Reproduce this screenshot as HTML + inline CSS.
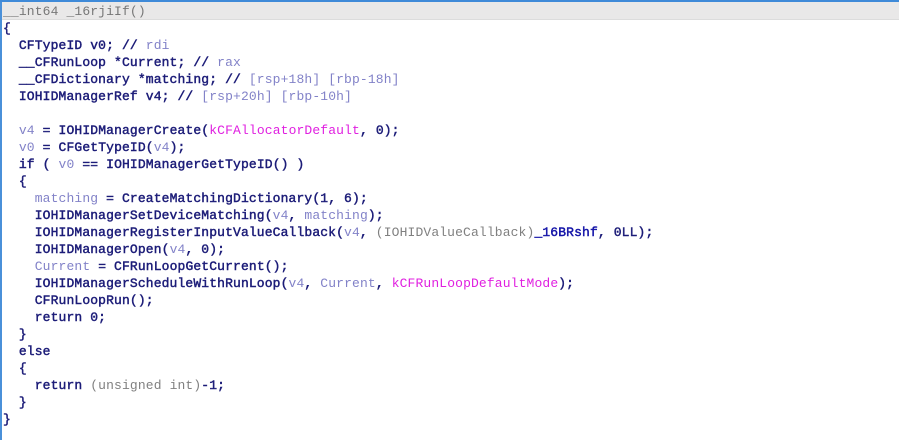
<!DOCTYPE html>
<html><head><meta charset="utf-8"><style>
html,body{margin:0;padding:0;background:#fff;width:899px;height:440px;overflow:hidden}
.top{position:absolute;left:0;top:0;width:899px;height:2px;background:#3f8ad8}
.hdr{position:absolute;left:0;top:2px;width:899px;height:17px;background:#e9e8e8;border-bottom:1px solid #dcdcdc}
.lb{position:absolute;left:0;top:2px;width:2px;height:438px;background:#4a90d9}
pre{position:absolute;left:3px;top:3px;margin:0;font-family:"Liberation Mono",monospace;font-size:13px;letter-spacing:0.13px;line-height:17px;color:#1c1c78;font-weight:normal;-webkit-text-stroke:0.45px #1c1c78}
.g{color:#808080;-webkit-text-stroke:0}
.v{color:#8282c8;-webkit-text-stroke:0}
.p{color:#e020e0;-webkit-text-stroke:0}
.h{color:#777;-webkit-text-stroke:0}
.f{color:#1414a8;-webkit-text-stroke:0.45px #1414a8}
</style></head><body>
<div class="top"></div><div class="hdr"></div><div class="lb"></div>
<pre><span class="h">__int64 _16rjiIf()</span>
{
  CFTypeID v0; // <span class="v">rdi</span>
  __CFRunLoop *Current; // <span class="v">rax</span>
  __CFDictionary *matching; // <span class="v">[rsp+18h] [rbp-18h]</span>
  IOHIDManagerRef v4; // <span class="v">[rsp+20h] [rbp-10h]</span>

  <span class="v">v4</span> = IOHIDManagerCreate(<span class="p">kCFAllocatorDefault</span>, 0);
  <span class="v">v0</span> = CFGetTypeID(<span class="v">v4</span>);
  if ( <span class="v">v0</span> == IOHIDManagerGetTypeID() )
  {
    <span class="v">matching</span> = CreateMatchingDictionary(1, 6);
    IOHIDManagerSetDeviceMatching(<span class="v">v4</span>, <span class="v">matching</span>);
    IOHIDManagerRegisterInputValueCallback(<span class="v">v4</span>, <span class="g">(IOHIDValueCallback)</span><span class="f">_16BRshf</span>, 0LL);
    IOHIDManagerOpen(<span class="v">v4</span>, 0);
    <span class="v">Current</span> = CFRunLoopGetCurrent();
    IOHIDManagerScheduleWithRunLoop(<span class="v">v4</span>, <span class="v">Current</span>, <span class="p">kCFRunLoopDefaultMode</span>);
    CFRunLoopRun();
    return 0;
  }
  else
  {
    return <span class="g">(unsigned int)</span>-1;
  }
}</pre>
</body></html>
